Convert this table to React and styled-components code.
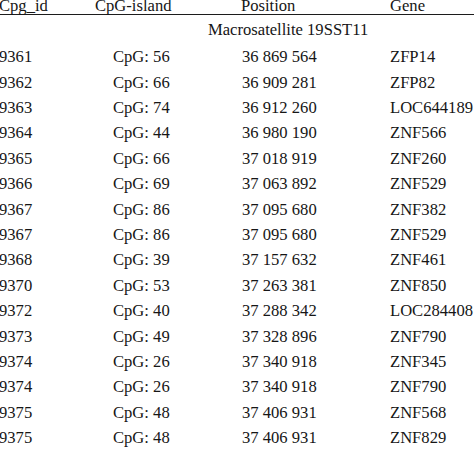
import React from "react";
import styled, { createGlobalStyle } from "styled-components";

const Global = createGlobalStyle`
  html, body { margin: 0; padding: 0; background: #fff; overflow: hidden; }
  body { width: 474px; height: 450px; }
`;

const Table = styled.div`
  margin: -2px 0 0 -1px;
  font-family: "Liberation Serif", "Times New Roman", serif;
  font-size: 16.6px;
  color: #161616;
  white-space: nowrap;
`;

const HeadRow = styled.div`
  display: grid;
  grid-template-columns: 96px 146px 149px 1fr;
  line-height: 16px;
  border-bottom: 1.3px solid #1c1c1c;
`;

const GroupRow = styled.div`
  line-height: 29.2px;
  padding-left: 209px;
`;

const Row = styled.div`
  display: grid;
  grid-template-columns: 114px 129px 148px 1fr;
  line-height: 25.4px;
`;

const Cell = styled.div`
  overflow: visible;
`;

const rows = [
  ["9361", "CpG: 56", "36 869 564", "ZFP14"],
  ["9362", "CpG: 66", "36 909 281", "ZFP82"],
  ["9363", "CpG: 74", "36 912 260", "LOC644189"],
  ["9364", "CpG: 44", "36 980 190", "ZNF566"],
  ["9365", "CpG: 66", "37 018 919", "ZNF260"],
  ["9366", "CpG: 69", "37 063 892", "ZNF529"],
  ["9367", "CpG: 86", "37 095 680", "ZNF382"],
  ["9367", "CpG: 86", "37 095 680", "ZNF529"],
  ["9368", "CpG: 39", "37 157 632", "ZNF461"],
  ["9370", "CpG: 53", "37 263 381", "ZNF850"],
  ["9372", "CpG: 40", "37 288 342", "LOC284408"],
  ["9373", "CpG: 49", "37 328 896", "ZNF790"],
  ["9374", "CpG: 26", "37 340 918", "ZNF345"],
  ["9374", "CpG: 26", "37 340 918", "ZNF790"],
  ["9375", "CpG: 48", "37 406 931", "ZNF568"],
  ["9375", "CpG: 48", "37 406 931", "ZNF829"],
];

export default function App() {
  return (
    <>
      <Global />
      <Table>
        <HeadRow>
          <Cell>Cpg_id</Cell>
          <Cell>CpG-island</Cell>
          <Cell>Position</Cell>
          <Cell>Gene</Cell>
        </HeadRow>
        <GroupRow>Macrosatellite 19SST11</GroupRow>
        {rows.map((r, i) => (
          <Row key={i}>
            {r.map((c, j) => (
              <Cell key={j}>{c}</Cell>
            ))}
          </Row>
        ))}
      </Table>
    </>
  );
}
